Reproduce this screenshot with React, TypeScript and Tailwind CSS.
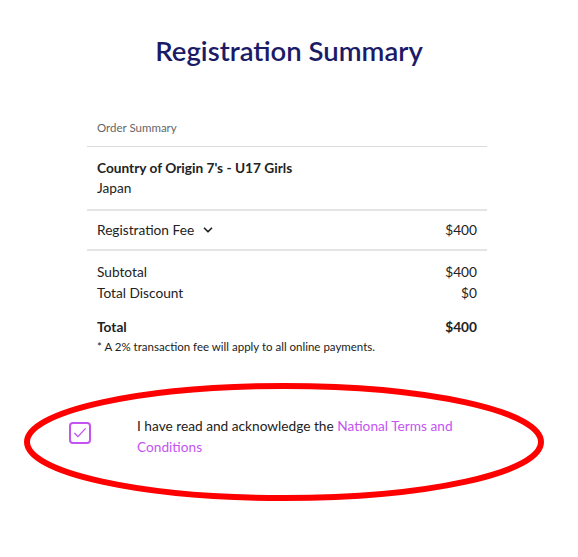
import { ChevronDown } from "lucide-react";

type Line = { label: string; amount: string };

const totals: Line[] = [
  { label: "Subtotal", amount: "$400" },
  { label: "Total Discount", amount: "$0" },
];

function Checkbox() {
  return (
    <div className="flex h-[22px] w-[22px] shrink-0 items-center justify-center rounded-[4px] border-2 border-[#c454f2]">
      <svg width="16" height="16" viewBox="0 0 24 24" fill="none" stroke="#c454f2" strokeWidth="2" strokeLinecap="round" strokeLinejoin="round">
        <path d="M4 12.5l5 5L20 5.5" />
      </svg>
    </div>
  );
}

export default function App() {
  return (
    <div className="relative h-[557px] w-[578px] bg-white font-['Lato',sans-serif] text-[#222]">
      <h1 className="pt-[33px] text-center text-[27.5px] font-semibold leading-[36px] text-[#1c1b67]">
        Registration Summary
      </h1>

      <div className="ml-[87px] mt-[52px] w-[400px]">
        {/* Header */}
        <div className="border-b border-[#dcdcdc] px-[10px] pb-[11px] text-[11.5px] leading-[14px] text-[#666]">
          Order Summary
        </div>

        {/* Event */}
        <div className="border-b-2 border-[#e4e4e4] px-[10px] pt-[11px] pb-[11px] text-[13.7px] leading-[20px]">
          <div className="font-bold">Country of Origin 7's - U17 Girls</div>
          <div>Japan</div>
        </div>

        {/* Fee */}
        <div className="flex items-center justify-between border-b-2 border-[#e4e4e4] px-[10px] py-[9px] text-[13.7px] leading-[20px]">
          <div className="flex items-center gap-[7px]">
            Registration Fee
            <ChevronDown size={14} strokeWidth={3} />
          </div>
          <div>$400</div>
        </div>

        {/* Totals */}
        <div className="px-[10px] pt-[10px] text-[13.7px] leading-[21px]">
          {totals.map((t) => (
            <div key={t.label} className="flex justify-between">
              <span>{t.label}</span>
              <span>{t.amount}</span>
            </div>
          ))}
          <div className="mt-[13px] flex justify-between font-bold">
            <span>Total</span>
            <span>$400</span>
          </div>
          <div className="text-[11.5px] leading-[20px]">
            * A 2% transaction fee will apply to all online payments.
          </div>
        </div>
      </div>

      {/* Terms */}
      <div className="mt-[58px] flex gap-[46px] pl-[69px] pr-[100px] text-[13.7px] leading-[21px]">
        <div className="mt-[7px]">
          <Checkbox />
        </div>
        <p>
          I have read and acknowledge the{" "}
          <span className="text-[#c454f2]">National Terms and Conditions</span>
        </p>
      </div>

      {/* annotation */}
      <svg className="pointer-events-none absolute left-0 top-0" width="578" height="557">
        <ellipse cx="284" cy="442" rx="257" ry="56" fill="none" stroke="#f00" strokeWidth="6" />
      </svg>
    </div>
  );
}
